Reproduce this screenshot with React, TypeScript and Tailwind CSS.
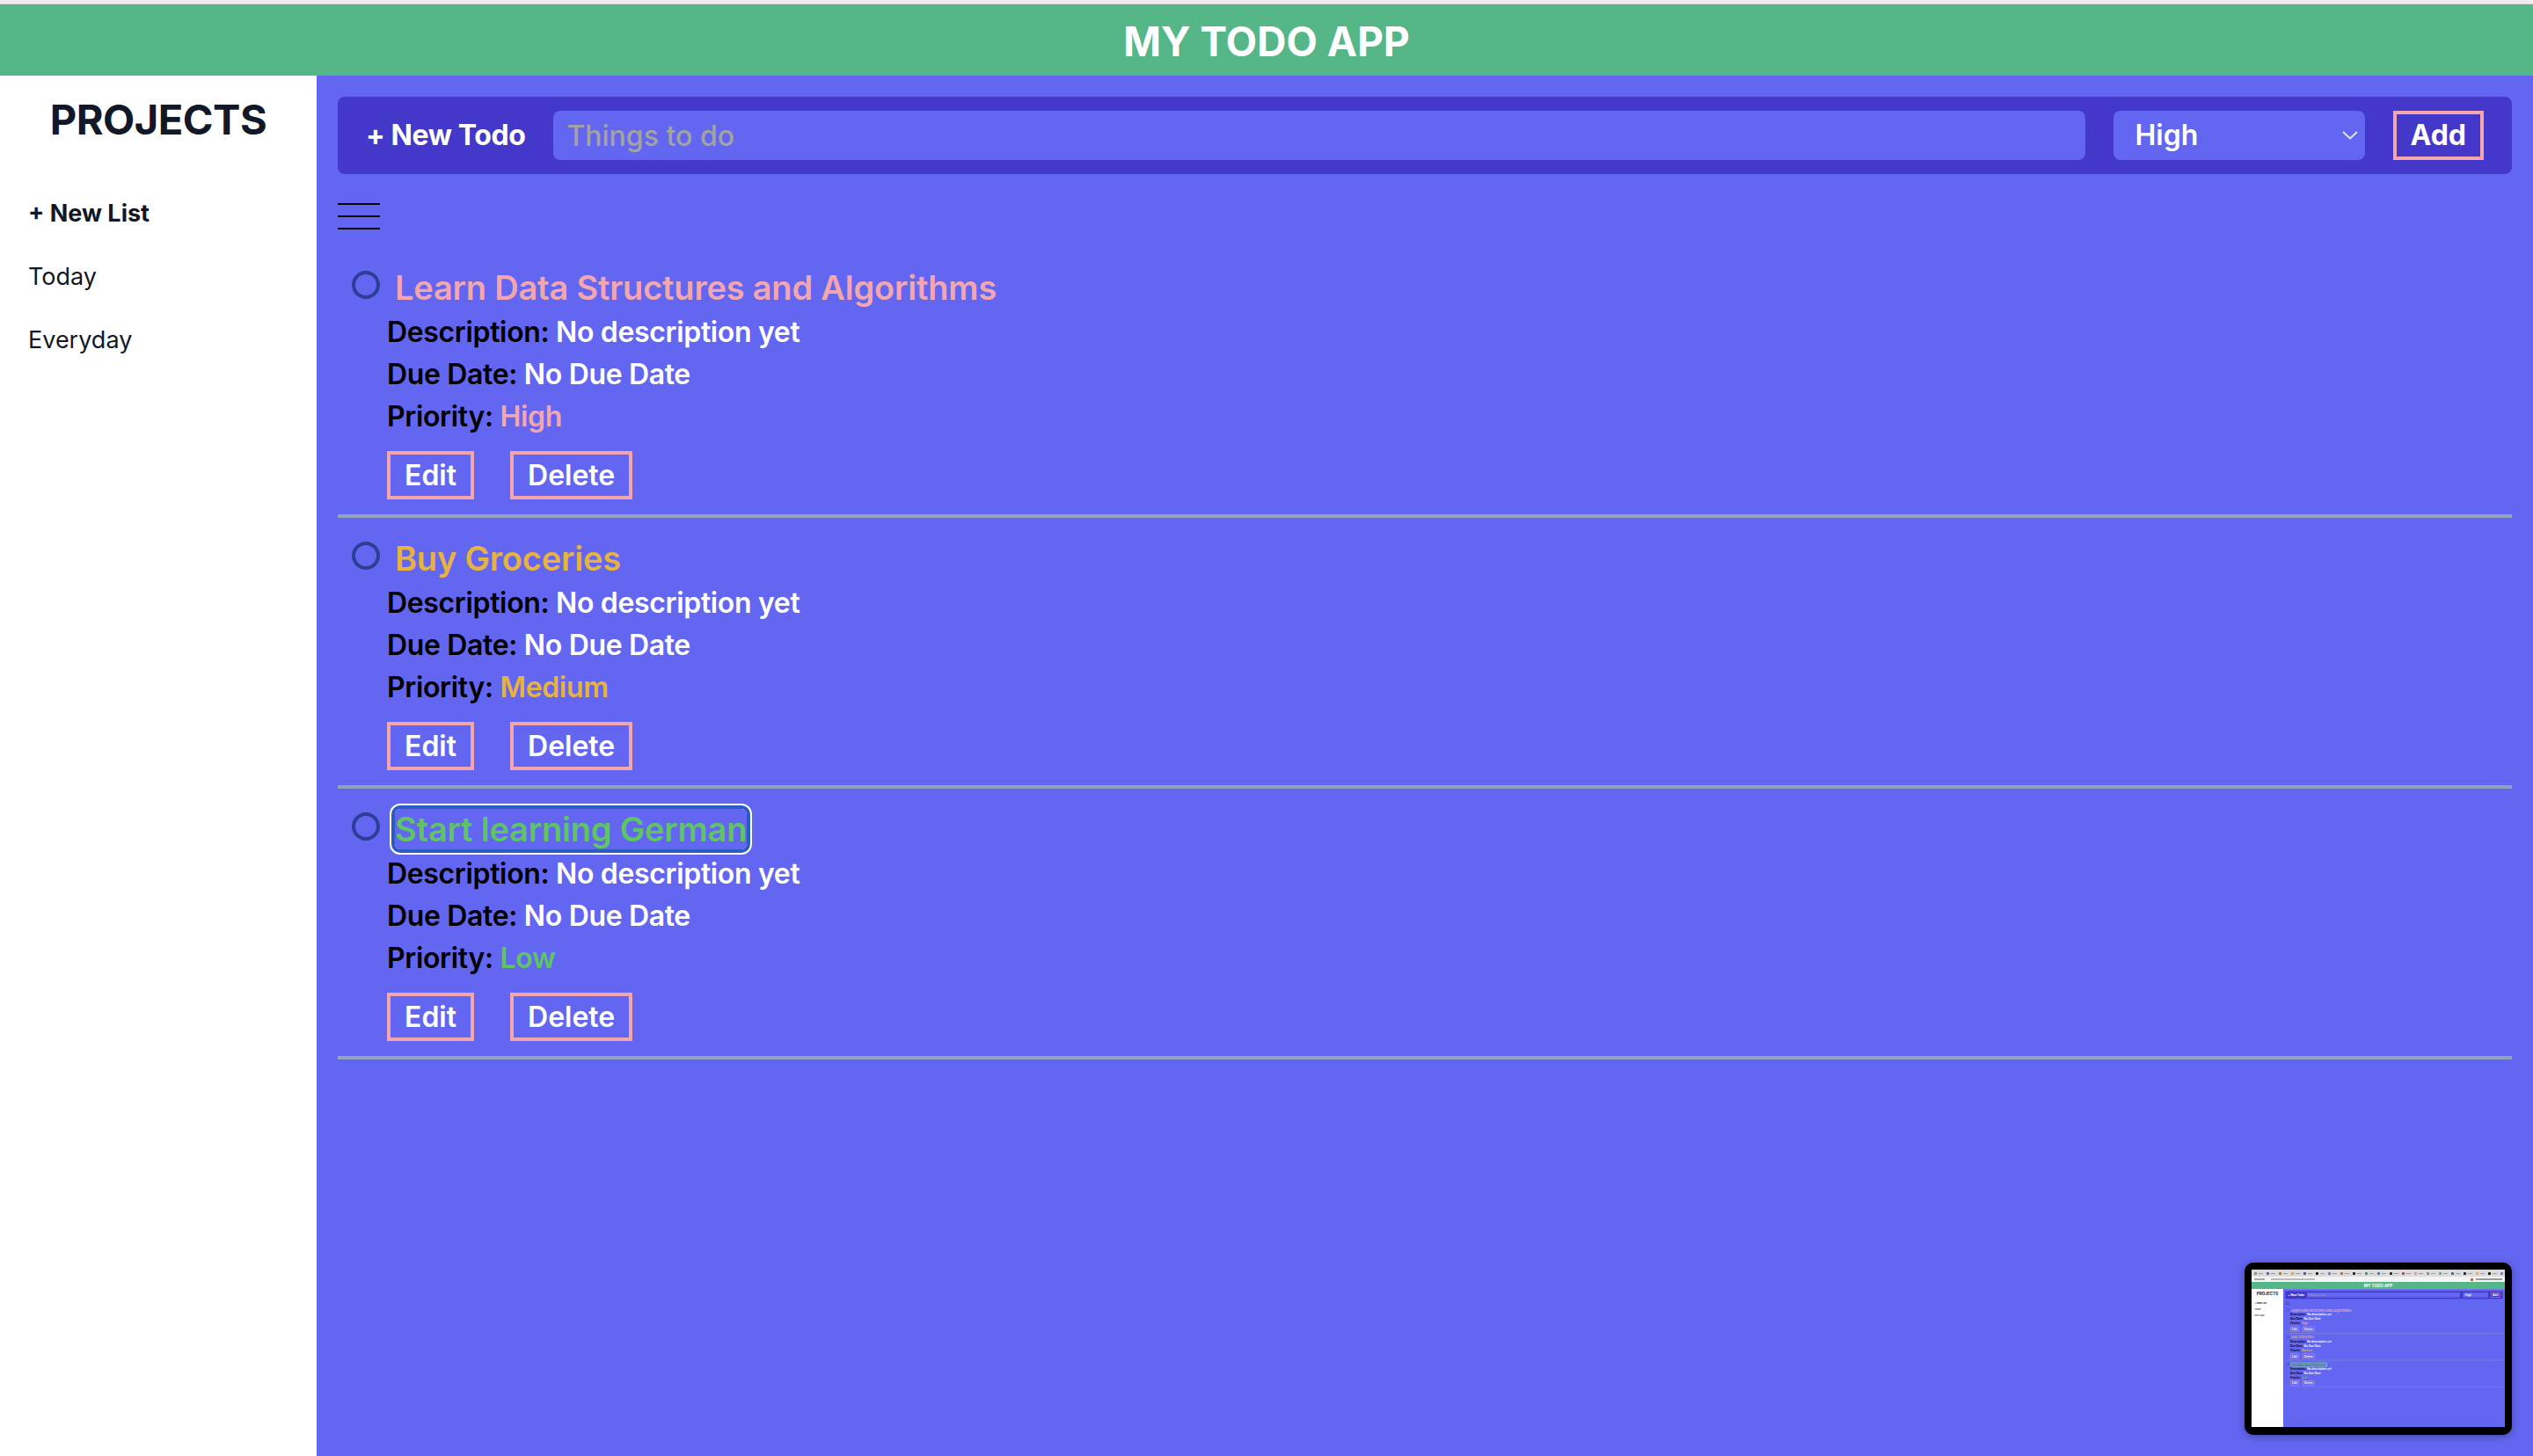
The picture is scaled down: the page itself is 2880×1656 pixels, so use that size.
import React from "react";

type Todo = { title: string; priority: string; color: string; focused?: boolean };

const todos: Todo[] = [
  { title: "Learn Data Structures and Algorithms", priority: "High", color: "text-[#f3a6ad]" },
  { title: "Buy Groceries", priority: "Medium", color: "text-[#e6b33e]" },
  { title: "Start learning German", priority: "Low", color: "text-[#5ec464]", focused: true },
];

function TodoItem({ t }: { t: Todo }) {
  return (
    <div className="pt-[19px] pl-4 pb-[17px] border-b-4 border-[#94a3b8]">
      <div className="flex items-start gap-[17px]">
        <div className="mt-[8px] w-[32px] h-[32px] rounded-full border-[4px] border-[#2d3e96] shrink-0" />
        <div className={`text-[38px] leading-[54px] font-semibold tracking-[-0.2px] ${t.color}`}>
          {t.focused ? (
            <span className="rounded-[6px] shadow-[0_0_0_4px_#2b5cc6,0_0_0_6px_#ffffff]">{t.title}</span>
          ) : (
            t.title
          )}
        </div>
      </div>
      <div className="ml-10 text-[32px] leading-[48px] font-semibold tracking-[-0.35px]">
        <div>
          <span className="text-black">Description:</span> <span className="text-white">No description yet</span>
        </div>
        <div>
          <span className="text-black">Due Date:</span> <span className="text-white">No Due Date</span>
        </div>
        <div>
          <span className="text-black">Priority:</span> <span className={t.color}>{t.priority}</span>
        </div>
        <div className="mt-[15px] flex gap-[41px] tracking-normal">
          <button className="h-[55px] border-4 border-[#f3a6ad] px-4 text-white font-semibold text-[32px] leading-[47px]">
            Edit
          </button>
          <button className="h-[55px] border-4 border-[#f3a6ad] px-4 text-white font-semibold text-[32px] leading-[47px]">
            Delete
          </button>
        </div>
      </div>
    </div>
  );
}

function Page({ mini }: { mini?: boolean }) {
  return (
    <div
      className="relative w-full h-[1656px] flex flex-col overflow-hidden bg-white"
      style={{ fontFamily: "Inter, 'Noto Sans', sans-serif" }}
    >
      {!mini && <div className="h-[5px] bg-[#ececec] border-b border-[#d6d6d6] shrink-0" />}
      <header className="h-[81px] shrink-0 bg-[#55b687] flex items-center justify-center">
        <h1 className="text-white font-bold text-[46px] leading-none mt-[2px]">MY TODO APP</h1>
      </header>
      <div className="flex flex-1 min-h-0">
        <aside className="w-[360px] shrink-0 bg-white text-[#111827]">
          <h2 className="mt-[26px] text-center text-[47px] leading-[48px] font-bold tracking-[-0.5px]">PROJECTS</h2>
          <ul className="mt-[47px] pl-[32px] text-[27px] leading-[40px]">
            <li className="py-4 font-bold">+ New List</li>
            <li className="py-4">Today</li>
            <li className="py-4">Everyday</li>
          </ul>
        </aside>
        <main className="flex-1 bg-[#6366f1] px-6 pt-6">
          <div className="h-[88px] rounded-lg bg-[#4338ca] pl-8 pr-8 flex items-center gap-8">
            <button className="text-white font-bold text-[32px] leading-[48px] shrink-0 tracking-[-0.4px]">+ New Todo</button>
            <input
              className="flex-1 h-[56px] rounded-lg bg-[#6366f1] px-[15px] text-[32px] font-medium text-white placeholder:text-[#a3a3a3] outline-none"
              placeholder="Things to do"
              readOnly
            />
            <div className="w-[286px] h-[56px] rounded-lg bg-[#6366f1] pl-[25px] pr-[7px] flex items-center justify-between text-white font-semibold text-[32px] shrink-0">
              <span>High</span>
              <svg width="20" height="12" viewBox="0 0 20 12" fill="none">
                <path d="M2 2 L10 9.5 L18 2" stroke="#e6e6ff" strokeWidth="2" />
              </svg>
            </div>
            <button className="h-[56px] border-4 border-[#f3a6ad] px-4 text-white font-bold text-[32px] leading-[48px] shrink-0">
              Add
            </button>
          </div>
          <div className="mt-[33px] w-[48px] flex flex-col gap-[12px]">
            <div className="h-[2px] bg-black" />
            <div className="h-[2px] bg-black" />
            <div className="h-[2px] bg-black" />
          </div>
          <div className="mt-[20px]">
            {todos.map((t) => (
              <TodoItem key={t.title} t={t} />
            ))}
          </div>
        </main>
      </div>
      {!mini && <Thumbnail />}
    </div>
  );
}

function Thumbnail() {
  const favs = [
    "#4caf50", "#3b5bdb", "#e8590c", "#f59f00", "#364fc7", "#111111", "#845ef7", "#e8590c", "#222222",
    "#2f9e44", "#1c7ed6", "#222222", "#e03131", "#f783ac", "#868e96", "#40c057", "#1971c2", "#222222",
    "#fab005", "#111111", "#5c7cfa", "#22b8cf", "#4263eb",
  ];
  return (
    <div className="absolute right-[24px] bottom-[24px] w-[304px] h-[196px] rounded-[10px] bg-black p-[8px] shadow-[0_2px_8px_rgba(0,0,0,0.3)]">
      <div className="w-[288px] h-[179px] overflow-hidden flex flex-col bg-white">
        <div className="h-[8px] bg-[#dcdcdc] flex items-center gap-[4px] px-[3px] shrink-0">
          {favs.map((c, i) => (
            <div key={i} className="flex items-center gap-[2px]">
              <div className="w-[3px] h-[3px] rounded-[1px]" style={{ backgroundColor: c }} />
              <div className="w-[5px] h-[1px] bg-[#9a9a9a]" />
            </div>
          ))}
        </div>
        <div className="h-[6px] bg-[#f4f4f4] flex items-center px-[3px] gap-[3px] shrink-0">
          <div className="w-[12px] h-[2px] bg-[#aaa]" />
          <div className="w-[1px]" />
          <div className="w-[50px] h-[2px] bg-[#bbb]" />
          <div className="flex-1" />
          <div className="w-[3px] h-[3px] bg-[#e8590c]" />
          <div className="w-[30px] h-[2px] bg-[#999]" />
        </div>
        <div className="relative w-[288px] h-[165px] overflow-hidden">
          <div className="absolute left-0 top-0 w-[2880px] h-[1650px] origin-top-left scale-[0.1]">
            <Page mini />
          </div>
        </div>
      </div>
    </div>
  );
}

export default function App() {
  return <Page />;
}
